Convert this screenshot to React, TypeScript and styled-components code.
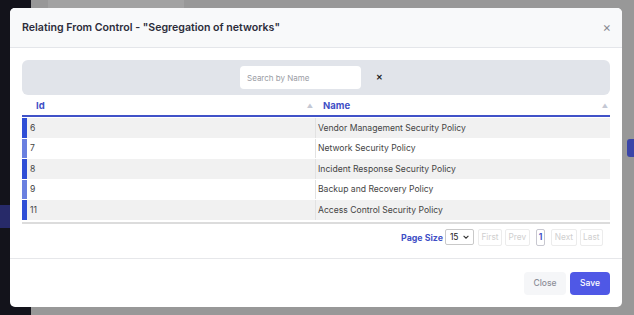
import React from 'react'
import styled, { createGlobalStyle } from 'styled-components'

interface Policy {
  id: number
  name: string
}

const policies: Policy[] = [
  { id: 6, name: 'Vendor Management Security Policy' },
  { id: 7, name: 'Network Security Policy' },
  { id: 8, name: 'Incident Response Security Policy' },
  { id: 9, name: 'Backup and Recovery Policy' },
  { id: 11, name: 'Access Control Security Policy' },
]

const pagerButtons = ['First', 'Prev', '1', 'Next', 'Last']

export default function App() {
  return (
    <>
      <GlobalStyle />
      <Page>
        <Sidebar>
          <SidebarItem />
        </Sidebar>
        <Main>
          <TopStrip />
          <BackdropToolbar>
            <BackdropButton />
          </BackdropToolbar>
        </Main>

        <Modal>
          <Header>
            <Title>Relating From Control - "Segregation of networks"</Title>
            <HeaderClose>×</HeaderClose>
          </Header>

          <Body>
            <SearchBar>
              <SearchInput placeholder="Search by Name" />
              <ClearButton>✕</ClearButton>
            </SearchBar>

            <Table>
              <thead>
                <tr>
                  <HeadCell $width={279}>
                    Id
                    <SortArrow>▲</SortArrow>
                  </HeadCell>
                  <HeadCell>
                    Name
                    <SortArrow>▲</SortArrow>
                  </HeadCell>
                </tr>
              </thead>
              <tbody>
                {policies.map((p, i) => (
                  <Row key={p.id} $striped={i % 2 === 0}>
                    <IdCell $dark={i % 2 === 0}>{p.id}</IdCell>
                    <NameCell>{p.name}</NameCell>
                  </Row>
                ))}
              </tbody>
            </Table>

            <Pager>
              <PagerLabel>Page Size</PagerLabel>
              <SizeSelect>
                15
                <svg width="8" height="8" viewBox="0 0 10 10">
                  <path d="M2 3.5 L5 6.5 L8 3.5" fill="none" stroke="#333" strokeWidth="1.4" />
                </svg>
              </SizeSelect>
              {pagerButtons.map((b) => (
                <PagerButton key={b} $active={b === '1'}>
                  {b}
                </PagerButton>
              ))}
            </Pager>
          </Body>

          <Footer>
            <CloseButton>Close</CloseButton>
            <SaveButton>Save</SaveButton>
          </Footer>
        </Modal>
      </Page>
    </>
  )
}

const GlobalStyle = createGlobalStyle`
  body {
    margin: 0;
    font-family: Inter, "Noto Sans", sans-serif;
  }
`

const Page = styled.div`
  position: relative;
  display: flex;
  width: 634px;
  height: 315px;
  overflow: hidden;
`

const Sidebar = styled.div`
  width: 31px;
  background: #13131b;
  padding-top: 205px;
  box-sizing: border-box;
`

const SidebarItem = styled.div`
  height: 23px;
  background: #272a69;
`

const Main = styled.div`
  flex: 1;
  display: flex;
  flex-direction: column;
  background: #989898;
`

const TopStrip = styled.div`
  height: 8px;
  margin-left: 17px;
  width: 136px;
  background: #a2a2a2;
`

const BackdropToolbar = styled.div`
  display: flex;
  justify-content: flex-end;
  margin-top: 131px;
`

const BackdropButton = styled.div`
  width: 7px;
  height: 18px;
  border-radius: 3px 0 0 3px;
  background: #3a45a8;
`

const Modal = styled.div`
  position: absolute;
  top: 8px;
  left: 10px;
  width: 612px;
  height: 299px;
  background: #fff;
  border-radius: 5px;
  display: flex;
  flex-direction: column;
  overflow: hidden;
`

const Header = styled.div`
  height: 40px;
  flex-shrink: 0;
  box-sizing: border-box;
  display: flex;
  align-items: center;
  justify-content: space-between;
  padding: 0 11px 0 12px;
  background: #f8f9fa;
  border-bottom: 1px solid #e4e6ea;
`

const Title = styled.div`
  font-size: 10.6px;
  font-weight: 600;
  color: #2c2d3a;
`

const HeaderClose = styled.div`
  font-size: 13px;
  color: #8a8c94;
  line-height: 1;
`

const Body = styled.div`
  flex: 1;
  padding: 12px 12px 0;
  display: flex;
  flex-direction: column;
`

const SearchBar = styled.div`
  height: 35px;
  flex-shrink: 0;
  display: flex;
  align-items: center;
  padding-left: 218px;
  background: #e1e4ea;
  border-radius: 6px;
`

const SearchInput = styled.input`
  width: 121px;
  height: 23px;
  box-sizing: border-box;
  border: none;
  border-radius: 4px;
  padding: 0 7px;
  font-family: Inter, sans-serif;
  font-size: 8px;
  outline: none;
  background: #fff;
  &::placeholder {
    color: #9a9ca4;
  }
`

const ClearButton = styled.div`
  margin-left: 15px;
  font-size: 7.5px;
  font-weight: 700;
  color: #222;
`

const Table = styled.table`
  width: 100%;
  border-collapse: separate;
  border-spacing: 0 1px;
  border-bottom: 2px solid #dcdcdc;
  padding-bottom: 1px;
`

const HeadCell = styled.th<{ $width?: number }>`
  position: relative;
  width: ${(p) => (p.$width ? `${p.$width}px` : 'auto')};
  height: 19px;
  padding: 0 0 0 14px;
  text-align: left;
  font-size: 9.5px;
  font-weight: 700;
  color: #3f4fc6;
  border-bottom: 2px solid #4052c8;
  &:last-child {
    padding-left: 8px;
  }
`

const SortArrow = styled.span`
  position: absolute;
  right: 2px;
  top: 6px;
  font-size: 6px;
  color: #c4c8d4;
`

const Row = styled.tr<{ $striped: boolean }>`
  background: ${(p) => (p.$striped ? '#f1f1f1' : '#fff')};
  font-size: 8.6px;
  color: #444;
`

const IdCell = styled.td<{ $dark: boolean }>`
  height: 19.5px;
  padding: 0 0 0 3px;
  border-left: 5px solid ${(p) => (p.$dark ? '#2f4ed6' : '#6a80e0')};
`

const NameCell = styled.td`
  padding: 0 0 0 2px;
  border-left: 1px solid #e2e2e2;
`

const Pager = styled.div`
  display: flex;
  align-items: center;
  justify-content: flex-end;
  gap: 3px;
  margin-top: 5px;
  padding-right: 7px;
`

const PagerLabel = styled.span`
  font-size: 8.8px;
  font-weight: 700;
  color: #3f4fc6;
  margin-right: -1px;
`

const SizeSelect = styled.div`
  width: 29px;
  height: 16px;
  box-sizing: border-box;
  display: flex;
  align-items: center;
  justify-content: space-between;
  padding: 0 3px 0 4px;
  border: 1px solid #c9c9c9;
  border-radius: 2px;
  font-size: 8.5px;
  color: #222;
  margin-right: 1px;
`

const PagerButton = styled.div<{ $active: boolean }>`
  height: 17px;
  box-sizing: border-box;
  display: flex;
  align-items: center;
  justify-content: center;
  padding: 0 ${(p) => (p.$active ? '2px' : '2.5px')};
  margin: 0 ${(p) => (p.$active ? '3px' : '0')};
  border: 1px solid ${(p) => (p.$active ? '#c8c8d0' : '#ececec')};
  border-radius: 2px;
  font-size: 8.3px;
  font-weight: ${(p) => (p.$active ? 700 : 400)};
  color: ${(p) => (p.$active ? '#3f4fc6' : '#cfcfcf')};
`

const Footer = styled.div`
  height: 49px;
  flex-shrink: 0;
  box-sizing: border-box;
  display: flex;
  align-items: center;
  justify-content: flex-end;
  gap: 4px;
  padding: 0 12px;
  border-top: 1px solid #e6e7ea;
`

const BaseButton = styled.button`
  height: 23px;
  border: none;
  border-radius: 4px;
  font-family: Inter, sans-serif;
  font-size: 8.5px;
  font-weight: 500;
  cursor: pointer;
`

const CloseButton = styled(BaseButton)`
  width: 42px;
  background: #f5f6f8;
  color: #8d8f99;
`

const SaveButton = styled(BaseButton)`
  width: 40px;
  background: #4f58e6;
  color: #fff;
`
